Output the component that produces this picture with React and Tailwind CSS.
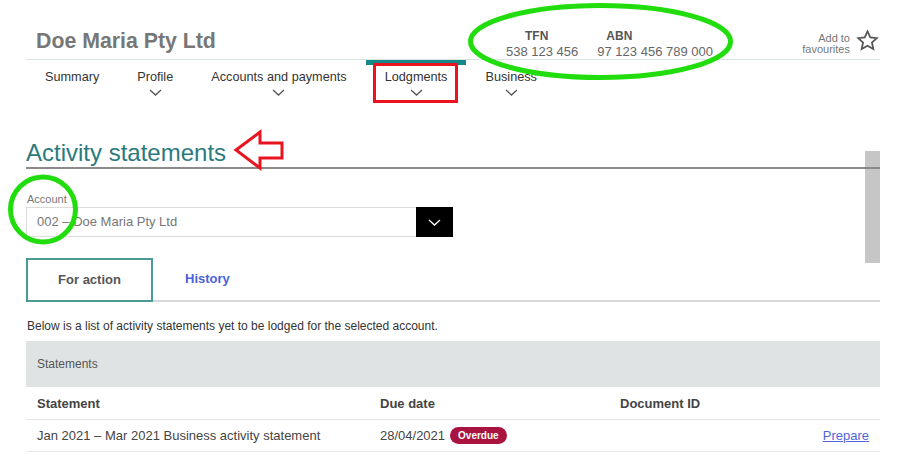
import React from 'react';

const Chevron = ({ className = 'stroke-[#555]' }) => (
  <svg width="13" height="7" viewBox="0 0 13 7" className={className} fill="none">
    <path d="M1 1l5.5 5L12 1" strokeWidth="1.3" />
  </svg>
);

const navItems = [
  { label: 'Summary', chevron: false },
  { label: 'Profile', chevron: true },
  { label: 'Accounts and payments', chevron: true },
  { label: 'Lodgments', chevron: true, active: true },
  { label: 'Business', chevron: true },
];

const Header = () => (
  <div className="flex h-[60px] pt-[29px] border-b border-[#d8e3e3]">
    <div className="w-[480px] pl-[10px] text-[21.3px] leading-[24px] font-bold text-[#777]">
      Doe Maria Pty Ltd
    </div>
    <div className="flex gap-[19px] text-[#666]">
      <div className="flex flex-col">
        <span className="pl-[19px] text-[12px] leading-[15px] font-bold text-[#555]">TFN</span>
        <span className="text-[13px] leading-[15px]">538 123 456</span>
      </div>
      <div className="flex flex-col">
        <span className="pl-[9px] text-[12px] leading-[15px] font-bold text-[#555]">ABN</span>
        <span className="text-[13px] leading-[15px]">97 123 456 789 000</span>
      </div>
    </div>
    <div className="ml-auto -mt-[2px] flex items-start gap-[6px]">
      <div className="pt-[6px] text-right text-[11px] leading-[11px] text-[#777]">
        Add to<br />favourites
      </div>
      <svg width="23" height="23" viewBox="0 0 24 24" fill="none" className="mt-[2px] mr-[1px] stroke-[#555]">
        <path d="M12 2.5l2.9 6.3 6.8.7-5.1 4.6 1.5 6.8L12 17.4l-6.1 3.5 1.5-6.8-5.1-4.6 6.8-.7z" strokeWidth="1.8" strokeLinejoin="miter" />
      </svg>
    </div>
  </div>
);

const Nav = () => (
  <div className="flex h-[40px]">
    {navItems.map((item) => (
      <div
        key={item.label}
        className={`flex flex-col items-center px-[19px] pt-[4px] border-t-[5px] ${item.active ? 'border-[#17888a]' : 'border-transparent'}`}
      >
        <span className="text-[12.7px] leading-[16px] text-[#333]">{item.label}</span>
        {item.chevron && (
          <span className="mt-[4px]">
            <Chevron />
          </span>
        )}
      </div>
    ))}
  </div>
);

const Annotations = () => (
  <svg width="905" height="461" className="absolute left-0 top-0 pointer-events-none z-20" fill="none">
    <ellipse cx="600.5" cy="41.5" rx="130" ry="36" stroke="#22dd0e" strokeWidth="5" />
    <circle cx="43" cy="209.5" r="32.5" stroke="#22dd0e" strokeWidth="5" />
    <rect x="374.5" y="64.5" width="82" height="37" stroke="#e8141f" strokeWidth="3" />
    <polygon points="236,150 260,132 260,143 282,143 282,158 260,158 260,168" stroke="#e8141f" strokeWidth="3" strokeLinejoin="miter" />
  </svg>
);

export default function App() {
  return (
    <div className="relative w-[905px] h-[461px] overflow-hidden bg-white" style={{ fontFamily: '"Liberation Sans", Arial, sans-serif' }}>
      <div className="absolute left-[865px] top-[151px] w-[15px] h-[112px] bg-[#c6c6c6]" />
      <Annotations />
      <div className="ml-[26px] mr-[25px]">
        <Header />
        <Nav />

        <h1 className="relative z-10 mt-[39px] h-[30px] border-b-2 border-[#8a8a8a] text-[24px] leading-[28px] text-[#2b7a7e]">
          Activity statements
        </h1>

        <div className="mt-[24px] pl-[1px] text-[11px] leading-[13px] text-[#777]">Account</div>
        <div className="mt-[1px] flex w-[427px] h-[30px] border border-[#dcdcdc]">
          <div className="flex-1 flex items-center pl-[10px] text-[13px] text-[#777]">
            002 – Doe Maria Pty Ltd
          </div>
          <div className="w-[37px] -my-px -mr-px flex items-center justify-center bg-black">
            <Chevron className="stroke-white" />
          </div>
        </div>

        <div className="mt-[21px] flex">
          <div className="w-[127px] h-[44px] flex items-center justify-center border-2 border-[#4b9a9a] text-[13px] font-bold text-[#555]">
            For action
          </div>
          <div className="flex-1 flex items-center pl-[32px] border-b-2 border-[#d8d8d8] text-[13px] font-bold text-[#4b5fdc]">
            History
          </div>
        </div>

        <p className="mt-[17px] pl-[1px] text-[12px] leading-[14px] text-[#333]">
          Below is a list of activity statements yet to be lodged for the selected account.
        </p>

        <div className="mt-[8px] h-[46px] flex items-center px-[11px] bg-[#dfe3e3] text-[12px] text-[#555]">
          Statements
        </div>
        <div className="grid grid-cols-[343px_240px_1fr] h-[33px] items-center pt-px px-[11px] border-b border-[#e4e4e4] text-[13px] font-bold text-[#444]">
          <span>Statement</span>
          <span>Due date</span>
          <span>Document ID</span>
        </div>
        <div className="grid grid-cols-[343px_240px_1fr] h-[32px] items-center px-[11px] border-b border-[#e8e8e8] text-[13px] text-[#444]">
          <span>Jan 2021 – Mar 2021 Business activity statement</span>
          <span className="flex items-center gap-[5px]">
            28/04/2021
            <span className="h-[17px] px-[8px] flex items-center rounded-full bg-[#a8143f] text-[10px] font-bold text-white">
              Overdue
            </span>
          </span>
          <span className="text-right text-[#5066d8] underline">Prepare</span>
        </div>
      </div>
    </div>
  );
}
